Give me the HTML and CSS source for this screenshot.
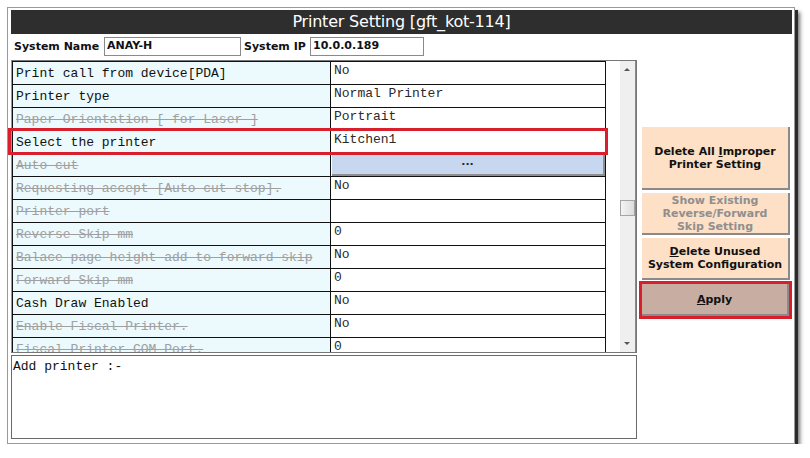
FILE: index.html
```html
<!DOCTYPE html>
<html>
<head>
<meta charset="utf-8">
<link rel="stylesheet" href="styles.css">
</head>
<body>
<div class="page">
  <div class="window">
    <div class="title">Printer Setting [gft_kot-114]</div>
    <div class="main">
      <div class="left">
        <div class="sysrow">
          <span class="lbl">System Name</span>
          <span class="field f-name">ANAY-H</span>
          <span class="lbl lbl-ip">System IP</span>
          <span class="field f-ip">10.0.0.189</span>
        </div>
        <div class="grid-wrap">
          <div class="clip">
            <table class="grid">
              <tr><td class="k"><div class="c">Print call from device[PDA]</div></td><td class="v"><div class="c">No</div></td></tr>
              <tr><td class="k"><div class="c">Printer type</div></td><td class="v"><div class="c">Normal Printer</div></td></tr>
              <tr><td class="k off"><div class="c">Paper Orientation [ for Laser ]</div></td><td class="v"><div class="c">Portrait</div></td></tr>
              <tr><td class="k"><div class="c">Select the printer</div></td><td class="v"><div class="c">Kitchen1</div></td></tr>
              <tr><td class="k off"><div class="c">Auto cut</div></td><td class="v btncell"><div class="dots">...</div></td></tr>
              <tr><td class="k off"><div class="c">Requesting accept [Auto cut stop].</div></td><td class="v"><div class="c">No</div></td></tr>
              <tr><td class="k off"><div class="c">Printer port</div></td><td class="v"><div class="c"></div></td></tr>
              <tr><td class="k off"><div class="c">Reverse Skip mm</div></td><td class="v"><div class="c">0</div></td></tr>
              <tr><td class="k off"><div class="c">Balace page height add to forward skip</div></td><td class="v"><div class="c">No</div></td></tr>
              <tr><td class="k off"><div class="c">Forward Skip mm</div></td><td class="v"><div class="c">0</div></td></tr>
              <tr><td class="k"><div class="c">Cash Draw Enabled</div></td><td class="v"><div class="c">No</div></td></tr>
              <tr><td class="k off"><div class="c">Enable Fiscal Printer.</div></td><td class="v"><div class="c">No</div></td></tr>
              <tr><td class="k off"><div class="c">Fiscal Printer COM Port.</div></td><td class="v"><div class="c">0</div></td></tr>
            </table>
          </div>
          <div class="hl-sel"></div>
          <div class="scrollbar">
            <div class="arrow up"></div>
            <div class="thumb"></div>
            <div class="arrow down"></div>
          </div>
        </div>
        <div class="notes">Add printer :-</div>
      </div>
      <div class="right">
        <div class="btn b1"><span>Delete All <u>I</u>mproper<br>Printer Setting</span></div>
        <div class="btn b2 disabled"><span>Show Existing<br>Reverse/Forward<br>Skip Setting</span></div>
        <div class="btn b3"><span><u>D</u>elete Unused<br>System Configuration</span></div>
        <div class="apply-wrap">
          <div class="btn apply"><span><u>A</u>pply</span></div>
        </div>
      </div>
    </div>
  </div>
</div>
</body>
</html>
```
FILE: styles.css
```css
html, body {
  margin: 0;
  padding: 0;
  background: #ffffff;
}
.page {
  padding: 7px 0 0 7px;
}
.window {
  width: 781px;
  height: 430px;
  border: 1px solid #9a9a9a;
  padding: 2px 2px 3px 3px;
  background: #fff;
  box-shadow: 3px 3px 0 #2b2b2b, 5px 5px 4px rgba(0,0,0,0.55);
}
.title {
  height: 24px;
  line-height: 24px;
  background: #2e2e2e;
  color: #fff;
  text-align: center;
  font-family: "DejaVu Sans", sans-serif;
  font-size: 16px;
  letter-spacing: -0.2px;
}
.main {
  display: flex;
}
.left {
  width: 626px;
}
.sysrow {
  display: flex;
  align-items: center;
  height: 18px;
  margin-top: 3px;
  font-family: "DejaVu Sans", sans-serif;
  font-weight: bold;
  font-size: 11px;
  color: #111;
}
.lbl {
  padding-left: 3px;
  width: 90px;
}
.lbl-ip {
  width: 66px;
}
.field {
  box-sizing: border-box;
  height: 19px;
  border: 1px solid #8a8a8a;
  padding: 1px 2px;
  line-height: 14px;
}
.f-name {
  width: 137px;
}
.f-ip {
  width: 114px;
}
.grid-wrap {
  position: relative;
  margin-top: 5px;
  box-sizing: border-box;
  height: 293px;
  border: 1px solid #777;
  border-left-color: #999;
  display: flex;
}
.clip {
  width: 594px;
  overflow: hidden;
}
.grid {
  border-collapse: collapse;
  width: 594px;
  font-family: "Liberation Mono", monospace;
  font-size: 13px;
  table-layout: fixed;
}
.grid td {
  border: 1px solid #111;
  padding: 0;
  white-space: nowrap;
  overflow: hidden;
}
.grid .c {
  height: 22px;
  overflow: hidden;
  padding-left: 3px;
}
.grid .k {
  width: 317px;
  background: #ecf9fd;
  color: #111;
}
.grid .k .c {
  line-height: 23px;
}
.grid .k.off {
  color: #a0a0a0;
  text-decoration: line-through;
}
.grid .v {
  color: #2a2a2a;
}
.grid .v .c {
  line-height: 18px;
}
.grid .btncell {
  padding: 0 0 0 1px;
}
.dots {
  box-sizing: border-box;
  height: 22px;
  background: #c7d7f0;
  border-right: 2px solid #8f8f8f;
  border-bottom: 2px solid #8f8f8f;
  text-align: center;
  font-family: "DejaVu Sans", sans-serif;
  font-weight: bold;
  font-size: 11px;
  line-height: 16px;
}
.hl-sel {
  position: absolute;
  left: -4px;
  top: 67px;
  width: 594px;
  height: 21px;
  border: 3px solid #d8202c;
}
.scrollbar {
  margin-left: auto;
  width: 15px;
  background: #efefef;
  border-right: 1px solid #8a8a8a;
  position: relative;
}
.arrow {
  position: absolute;
  left: 4px;
  width: 0;
  height: 0;
  border-left: 3px solid transparent;
  border-right: 3px solid transparent;
}
.arrow.up {
  top: 7px;
  border-bottom: 3px solid #555;
}
.arrow.down {
  bottom: 7px;
  border-top: 3px solid #555;
}
.thumb {
  position: absolute;
  left: 0;
  top: 139px;
  width: 13px;
  height: 14px;
  border: 1px solid #a5a5a5;
  background: linear-gradient(to right, #f4f4f4, #dcdcdc);
}
.notes {
  margin-top: 2px;
  box-sizing: border-box;
  height: 84px;
  border: 1px solid #6a6a6a;
  font-family: "Liberation Mono", monospace;
  font-size: 13px;
  padding: 3px 1px;
  color: #111;
}
.right {
  width: 148px;
  margin-left: 5px;
  padding-top: 93px;
  display: flex;
  flex-direction: column;
}
.btn {
  box-sizing: border-box;
  background: #fde0c6;
  border-right: 2px solid #8a8a8a;
  border-bottom: 2px solid #8a8a8a;
  text-align: center;
  font-family: "DejaVu Sans", sans-serif;
  font-weight: bold;
  font-size: 11px;
  line-height: 13px;
  color: #111;
  display: flex;
  align-items: center;
  justify-content: center;
}
.b1 {
  height: 63px;
}
.b2 {
  height: 42px;
  margin-top: 3px;
}
.b3 {
  height: 42px;
  margin-top: 3px;
}
.disabled {
  color: #8f8f8f;
}
.apply-wrap {
  margin-top: 1px;
  margin-left: -3px;
  width: 147px;
  border: 3px solid #d8202c;
}
.apply {
  height: 32px;
  background: #c8aea2;
}
```
